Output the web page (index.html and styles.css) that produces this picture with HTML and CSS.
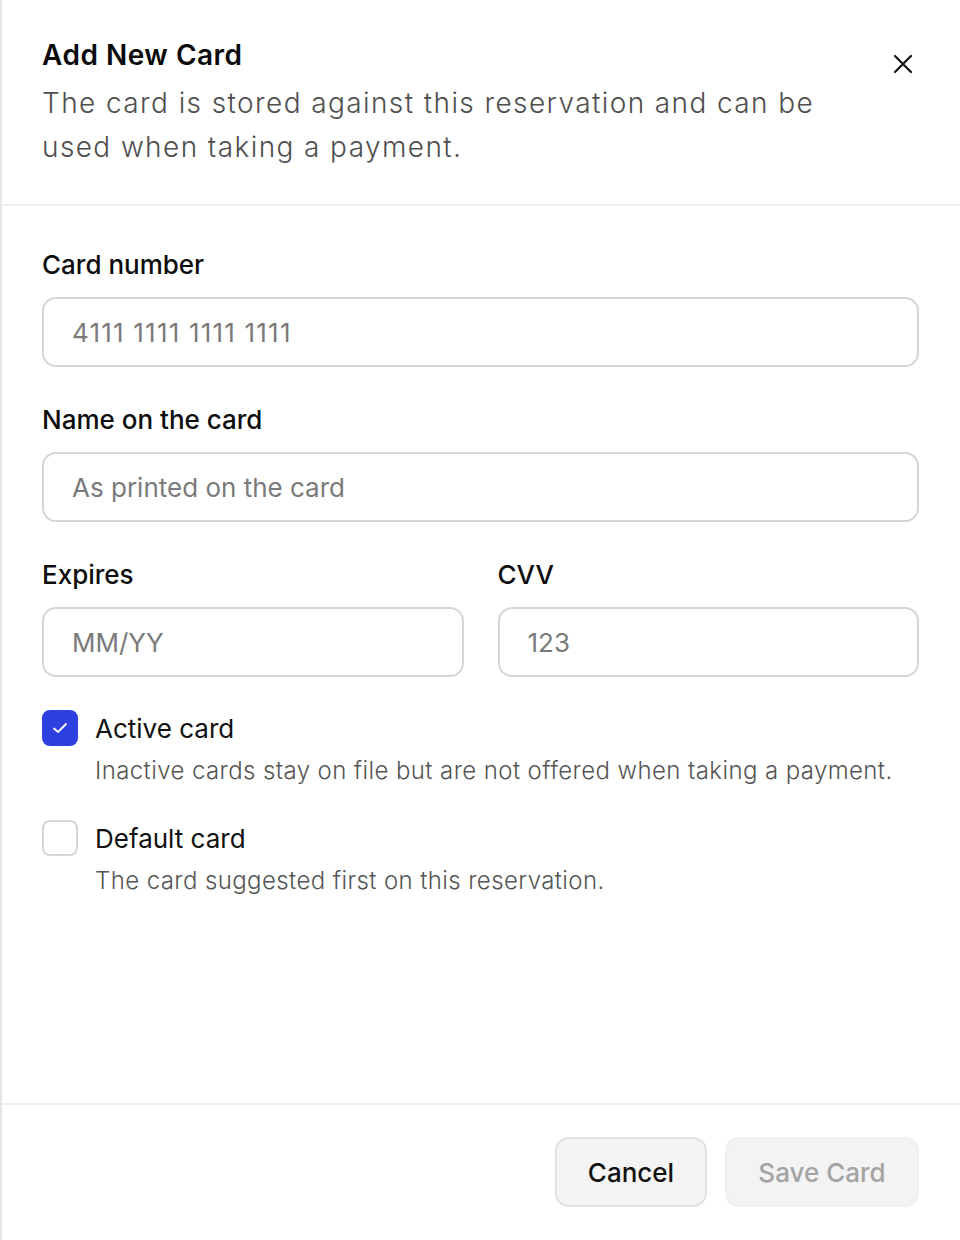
FILE: index.html
```html
<!DOCTYPE html>
<html lang="en">
<head>
<meta charset="utf-8">
<title>Add New Card</title>
<link rel="stylesheet" href="styles.css">
</head>
<body>
<div class="panel">
  <header class="header">
    <h1 class="title">Add New Card</h1>
    <p class="subtitle">The card is stored against this reservation and can be used when taking a payment.</p>
    <button class="close" aria-label="Close">
      <svg width="20" height="20" viewBox="0 0 20 20"><path d="M2 2 L18 18 M18 2 L2 18" stroke="#111" stroke-width="2.2" stroke-linecap="round" fill="none"/></svg>
    </button>
  </header>
  <main class="body">
    <div class="field">
      <label class="label">Card number</label>
      <div class="input num">4111 1111 1111 1111</div>
    </div>
    <div class="field">
      <label class="label">Name on the card</label>
      <div class="input">As printed on the card</div>
    </div>
    <div class="row">
      <div class="field">
        <label class="label">Expires</label>
        <div class="input">MM/YY</div>
      </div>
      <div class="field">
        <label class="label">CVV</label>
        <div class="input">123</div>
      </div>
    </div>
    <div class="check">
      <span class="box checked">
        <svg width="18" height="18" viewBox="0 0 18 18"><path d="M3 9.5 L7 13 L15 5" stroke="#fff" stroke-width="1.8" stroke-linecap="round" stroke-linejoin="round" fill="none"/></svg>
      </span>
      <div class="check-text">
        <div class="check-label">Active card</div>
        <div class="check-desc">Inactive cards stay on file but are not offered when taking a payment.</div>
      </div>
    </div>
    <div class="check">
      <span class="box"></span>
      <div class="check-text">
        <div class="check-label">Default card</div>
        <div class="check-desc">The card suggested first on this reservation.</div>
      </div>
    </div>
  </main>
  <footer class="footer">
    <button class="btn cancel">Cancel</button>
    <button class="btn save">Save Card</button>
  </footer>
</div>
</body>
</html>
```
FILE: styles.css
```css
* { box-sizing: border-box; }
html, body { margin: 0; padding: 0; background: #fff; }
body { font-family: Inter, "Noto Sans", sans-serif; color: #111; }
.panel {
  width: 960px;
  height: 1240px;
  border-left: 2px solid #e6e6e6;
  display: flex;
  flex-direction: column;
}
.header {
  position: relative;
  padding: 37px 41px 35px 40px;
  border-bottom: 2px solid #efefef;
}
.title {
  margin: 0;
  font-size: 28px;
  line-height: 36px;
  font-weight: 600;
  letter-spacing: 0.5px;
  color: #0b0b0b;
}
.subtitle {
  margin: 8px 0 0;
  max-width: 790px;
  font-size: 28px;
  line-height: 44px;
  font-weight: 300;
  color: #4f4f4f;
  letter-spacing: 1.4px;
}
.close {
  position: absolute;
  top: 54px;
  right: 47px;
  width: 20px;
  height: 20px;
  padding: 0;
  border: 0;
  background: none;
  display: flex;
}
.body {
  flex: 1;
  padding: 41px 41px 0 40px;
  display: flex;
  flex-direction: column;
}
.field { display: flex; flex-direction: column; margin-bottom: 35px; }
.row { display: grid; grid-template-columns: 1fr 1fr; column-gap: 34px; }
.label {
  font-size: 26px;
  line-height: 36px;
  font-weight: 500;
  color: #0d0d0d;
  margin-bottom: 14px;
}
.input {
  height: 70px;
  border: 2px solid #d6d6d6;
  border-radius: 14px;
  padding: 0 28px;
  display: flex;
  align-items: center;
  font-size: 26px;
  color: #7a7a7a;
}
.input.num { letter-spacing: 1.2px; }
.row .field { margin-bottom: 33px; }
.check { display: flex; gap: 17px; margin-bottom: 31px; }
.box {
  width: 36px;
  height: 36px;
  flex: none;
  border: 2px solid #d6d6d6;
  border-radius: 8px;
  display: flex;
  align-items: center;
  justify-content: center;
}
.box.checked { background: #2e40e0; border-color: #2e40e0; }
.check-label {
  font-size: 26px;
  line-height: 36px;
  font-weight: 400;
  color: #111;
  margin-top: 1px;
}
.check-desc {
  margin-top: 6px;
  font-size: 24px;
  line-height: 36px;
  font-weight: 300;
  color: #555;
  letter-spacing: 0.4px;
}
.footer {
  border-top: 2px solid #efefef;
  padding: 32px 41px 33px 40px;
  display: flex;
  justify-content: flex-end;
  gap: 18px;
}
.btn {
  height: 70px;
  border-radius: 14px;
  font-family: Inter, "Noto Sans", sans-serif;
  font-size: 26px;
  font-weight: 500;
  padding: 0;
  white-space: nowrap;
}
.cancel { background: #f4f4f4; border: 2px solid #e2e2e2; color: #111; width: 152px; }
.save { background: #f3f3f3; border: 2px solid #f0f0f0; color: #a3a3a3; width: 194px; }
```
